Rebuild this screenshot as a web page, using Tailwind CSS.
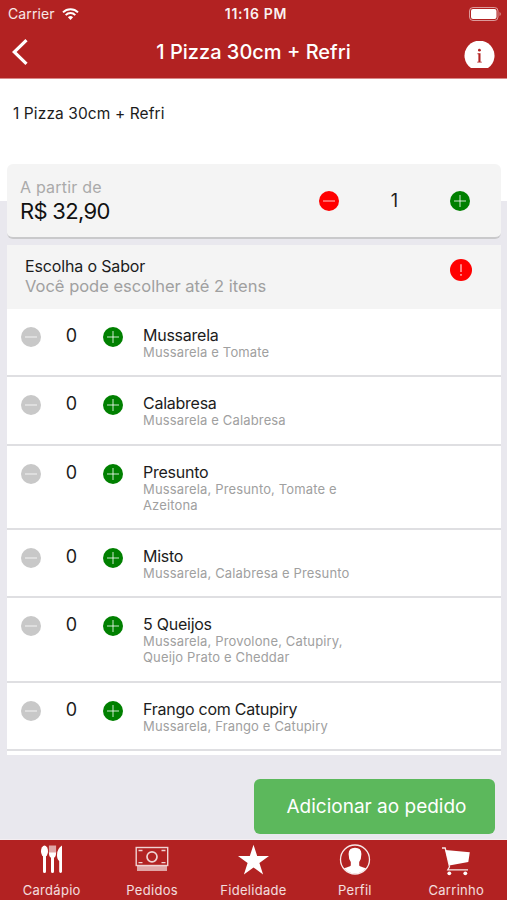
<!DOCTYPE html>
<html lang="pt-BR">
  <head>
    <meta charset="UTF-8" />
    <meta name="viewport" content="width=device-width, initial-scale=1.0" />
    <title>1 Pizza 30cm + Refri</title>
    <script src="https://cdn.jsdelivr.net/npm/@tailwindcss/browser@4"></script>
  </head>
  <body class="bg-[#e9e8ee]">
    <svg class="hidden">
      <symbol id="minus" viewBox="0 0 20 20">
        <circle cx="10" cy="10" r="10" fill="currentColor" />
        <path d="M4 10h12" stroke="#fff" stroke-opacity=".8" stroke-width="1" />
      </symbol>
      <symbol id="plus" viewBox="0 0 20 20">
        <circle cx="10" cy="10" r="10" fill="currentColor" />
        <path d="M4 10h12M10 4v12" stroke="#fff" stroke-opacity=".8" stroke-width="1" />
      </symbol>
    </svg>

    <div class="w-[507px] h-[900px] flex flex-col overflow-hidden font-['Inter',sans-serif] text-[#1c1c1c]">
      <header class="h-[79px] shrink-0 bg-[#b22222] text-white border-b border-[#d98888]">
        <div class="h-[27px] px-2 grid grid-cols-3 items-center text-sm leading-none">
          <div class="flex items-center gap-[7px]">
            <span class="text-[14px] tracking-[0.1px] text-white/90">Carrier</span>
            <svg class="w-[17px] h-3" viewBox="0 0 17 12" fill="none" stroke="#fff" stroke-width="2">
              <path d="M1 4.4a10.6 10.6 0 0 1 15 0M3.7 7.1a6.8 6.8 0 0 1 9.6 0" />
              <path d="M5.9 9.3a3.7 3.7 0 0 1 5.2 0L8.5 12z" fill="#fff" stroke="none" />
            </svg>
          </div>
          <span class="justify-self-center text-[14px] font-semibold tracking-[0.7px] text-white/95 ml-[5px]">11:16 PM</span>
          <svg class="justify-self-end w-[32px] h-[14px] -mr-[2px]" viewBox="0 0 32 14">
            <rect x=".5" y=".5" width="28.5" height="13" rx="3.5" fill="none" stroke="#fff" stroke-opacity=".55" />
            <rect x="2" y="2" width="25.5" height="10" rx="2" fill="#fff" />
            <path d="M30.5 5v4q1.3-.6 1.3-2t-1.3-2" fill="#fff" fill-opacity=".5" />
          </svg>
        </div>
        <div class="h-[51px] px-3 grid grid-cols-[31px_1fr_31px] items-center">
          <svg class="w-4 h-[26px] -mt-[2px]" viewBox="0 0 16 26" fill="none" stroke="#fff" stroke-width="3.2">
            <path d="M14.5 1.2 2.2 13l12.3 11.8" />
          </svg>
          <h1 class="justify-self-center -mt-[2px] text-[20px] font-medium whitespace-nowrap">1 Pizza 30cm + Refri</h1>
          <svg class="w-[31px] h-[27px] mt-[4px]" viewBox="0 0 31 27">
            <path d="M7 27a15 15 0 1 1 17 0z" fill="#fff" />
            <path d="M13.5 12.3h3v8.4h1.3v.9h-4.6v-.9h1.2v-7.5h-.9z" fill="#b22222" />
            <circle cx="15.4" cy="9.2" r="1.4" fill="#b22222" />
          </svg>
        </div>
      </header>

      <main class="grow">
        <div class="h-[122px] bg-white pl-[13px] pt-[23px]">
          <p class="text-[15.5px] leading-6 tracking-[0.1px]">1 Pizza 30cm + Refri</p>
        </div>

        <section class="-mt-[37px] ml-[7px] mr-[6px] h-[75px] relative flex items-center rounded-md bg-[#f4f4f4] border-b-2 border-[#c9c9cb] pl-[13px]">
          <div class="w-[299px] pt-[1px]">
            <p class="text-[16px] leading-5 tracking-[0.2px] text-[#aaa]">A partir de</p>
            <p class="text-[22px] leading-[28px] tracking-[-0.7px] text-[#111]">R$ 32,90</p>
          </div>
          <svg class="size-5 text-[#f00]"><use href="#minus" /></svg>
          <span class="w-[111px] text-center text-[18px]">1</span>
          <svg class="size-5 text-[#008000]"><use href="#plus" /></svg>
        </section>

        <section class="mt-[6px] ml-[7px] mr-[6px] bg-white h-[510px] overflow-hidden">
          <div class="h-[64px] bg-[#f4f4f4] pl-[18px] pr-[29px] pt-[11px] flex justify-between">
            <div>
              <h2 class="text-[16px] leading-5 tracking-[-0.15px]">Escolha o Sabor</h2>
              <p class="text-[16.5px] leading-5 text-[#a0a0a0]">Você pode escolher até 2 itens</p>
            </div>
            <svg class="size-[22px] mt-[3px]" viewBox="0 0 22 22">
              <circle cx="11" cy="11" r="11" fill="#f00" />
              <path d="M11 5.2v7.8M11 15v1.8" stroke="#fff" stroke-opacity=".85" stroke-width="1.2" />
            </svg>
          </div>

          <div id="flavors"></div>
        </section>

        <div class="flex justify-end mt-[24px] pr-[12px]">
          <button class="w-[241px] h-[55px] rounded-md bg-[#5cb85c] text-white text-[19px] pl-1 pt-[1px]">Adicionar ao pedido</button>
        </div>
      </main>

      <nav class="h-[61px] shrink-0 bg-[#b22222] border-t border-[#f4eef1] grid grid-cols-5 text-white">
        <a class="flex flex-col items-center pt-1 pl-[2px]">
          <svg class="w-[23px] h-8" viewBox="0 0 23 32" fill="#fff">
            <ellipse cx="4.5" cy="7.2" rx="3.5" ry="5.7" />
            <path d="M3 12h3v15.500a1.500 1.500 0 0 1-3 0zM11 12h3v15.500a1.500 1.500 0 0 1-3 0z" />
            <path d="M8.900 8.500h7.200q0 5.500-3.600 5.500t-3.600-5.500" />
            <path d="M8.900 1.500h7.200v7.500H8.900z" fill-opacity=".6" />
            <path d="M22 1.500v26a1.400 1.400 0 0 1-2.800 0V17q-2.200-1.500-2.200-6 0-6.500 5-9.500z" />
          </svg>
          <span class="text-[13px] leading-4 tracking-[0.3px] text-white/85 mt-[6px]">Cardápio</span>
        </a>
        <a class="flex flex-col items-center pt-1">
          <svg class="w-[34px] h-8" viewBox="0 0 34 32" fill="none" stroke="#fff" stroke-opacity=".8">
            <rect x="1.200" y="3.500" width="31.500" height="18" stroke-width="1.400" />
            <path d="M3.500 6.500h4M26.500 6.500h4M3.500 18.700h4M26.500 18.700h4" stroke-width="1.300" />
            <circle cx="17" cy="12.800" r="5" stroke-width="1.700" />
            <path d="M2 24.500h30" stroke-opacity=".6" stroke-width="5" />
          </svg>
          <span class="text-[13px] leading-4 tracking-[0.3px] text-white/85 mt-[6px]">Pedidos</span>
        </a>
        <a class="flex flex-col items-center pt-1">
          <svg class="w-8 h-8" viewBox="0 0 32 32" fill="#fff">
            <path d="m16.500 0.800 3.700 11.200H32l-9.600 7 3.700 11.500-9.600-7-9.600 7L10.600 19 1 12h11.800z" />
          </svg>
          <span class="text-[13px] leading-4 tracking-[0.3px] text-white/85 mt-[6px]">Fidelidade</span>
        </a>
        <a class="flex flex-col items-center pt-1">
          <svg class="w-8 h-8" viewBox="0 0 32 32">
            <circle cx="16" cy="15.500" r="14.500" fill="none" stroke="#fff" stroke-opacity=".9" stroke-width="1.300" />
            <path d="M16 3.800q6.400 0 6.400 6.200 0 5-2.200 8v3.500q1 1.300 6.800 2.700Q22.500 29.500 16 29.500T5 24.200q5.800-1.400 6.800-2.700V18q-2.200-3-2.200-8 0-6.200 6.400-6.200z" fill="#fff" />
          </svg>
          <span class="text-[13px] leading-4 tracking-[0.3px] text-white/85 mt-[6px]">Perfil</span>
        </a>
        <a class="flex flex-col items-center pt-1">
          <svg class="w-[30px] h-8" viewBox="0 0 30 32" fill="#fff">
            <path d="M1 4h3.200l4.300 18.800-1.700 3H27" fill="none" stroke="#fff" stroke-opacity=".9" stroke-width="1.300" />
            <path d="M4.300 6 28.800 8.300l-1.500 9.700L8.300 21.500z" />
            <circle cx="8.300" cy="29.300" r="1.900" />
            <circle cx="24.300" cy="29.300" r="1.900" />
          </svg>
          <span class="text-[13px] leading-4 tracking-[0.3px] text-white/85 mt-[6px]">Carrinho</span>
        </a>
      </nav>
    </div>

    <script>
      const flavors = [
        { name: "Mussarela", description: "Mussarela e Tomate", height: 68.4 },
        { name: "Calabresa", description: "Mussarela e Calabresa", height: 68.4 },
        { name: "Presunto", description: "Mussarela, Presunto, Tomate e<br>Azeitona", height: 84.3 },
        { name: "Misto", description: "Mussarela, Calabresa e Presunto", height: 68.3 },
        { name: "5 Queijos", description: "Mussarela, Provolone, Catupiry,<br>Queijo Prato e Cheddar", height: 84.3 },
        { name: "Frango com Catupiry", description: "Mussarela, Frango e Catupiry", height: 68.4 },
      ];

      document.getElementById("flavors").innerHTML = flavors
        .map(
          (flavor) => `
            <div class="flex items-start border-b-2 border-[#dfdfe2] pl-[14px] pt-[17px]" style="height: ${flavor.height}px">
              <svg class="size-5 text-[#c8c8c8] mt-[1px]"><use href="#minus" /></svg>
              <span class="w-[62px] pr-[1px] text-center text-[18px] leading-5">0</span>
              <svg class="size-5 text-[#008000] mt-[1px]"><use href="#plus" /></svg>
              <div class="ml-[20px]">
                <p class="text-[16px] leading-[18px] tracking-[-0.25px]">${flavor.name}</p>
                <p class="text-[13px] leading-4 tracking-[0.15px] text-[#a0a0a0]">${flavor.description}</p>
              </div>
            </div>`
        )
        .join("");
    </script>
  </body>
</html>
